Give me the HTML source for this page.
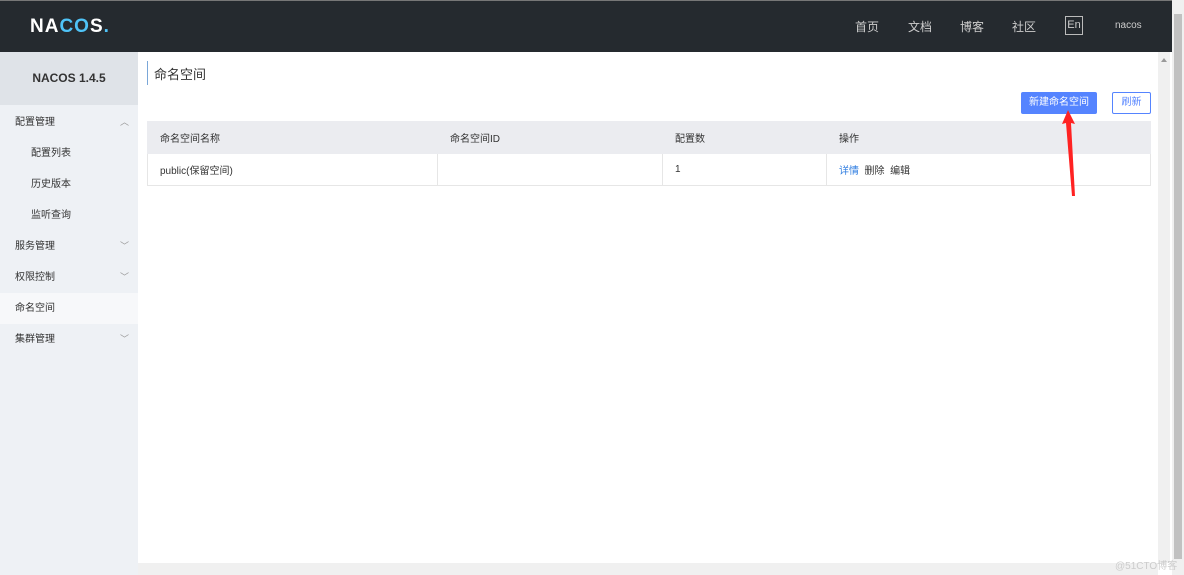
<!DOCTYPE html>
<html><head><meta charset="utf-8"><style>
*{margin:0;padding:0;box-sizing:border-box}
body{width:1184px;height:575px;overflow:hidden;font-family:"Liberation Sans","Noto Sans CJK SC",sans-serif;background:#fff;position:relative;font-size:10px;color:#333}
.hdr{position:absolute;left:0;top:0;width:1172px;height:52px;background:#252a2f;border-top:1px solid #777}
.logo{position:absolute;left:30px;top:15px;color:#fff;font-weight:bold;font-size:19px;letter-spacing:1px}
.nav{position:absolute;top:17px;color:#ccc;font-size:12px}
.en{position:absolute;left:1065px;top:15px;width:18px;height:19px;border:1px solid #bbb;color:#ccc;font-size:11px;text-align:center;line-height:17px}
.side{position:absolute;left:0;top:52px;width:138px;height:523px;background:#eef1f5}
.ver{height:53px;background:#dfe3e8;text-align:center;line-height:53px;font-weight:bold;font-size:12px;color:#333}
.it{height:31px;line-height:31px;padding-left:15px;font-size:10px;color:#333;position:relative;top:2px}
.it.sub{padding-left:31px}
.it.act{background:#f7f8fa}
.chev{position:absolute;right:9px;top:0;color:#999;font-size:9px}
.vs{position:absolute;left:1158px;top:52px;width:12px;height:511px;background:#f0f0f0}
.hs{position:absolute;left:138px;top:563px;width:1020px;height:12px;background:#f0f0f0}
.os{position:absolute;left:1172px;top:0;width:12px;height:575px;background:#f0f0f0}
.os i{position:absolute;left:2px;top:14px;width:8px;height:545px;background:#c1c1c1}
table{position:absolute;left:147px;top:121px;width:1004px;border-collapse:collapse;font-size:10px}
td{height:32px;padding-left:12px;border:1px solid #e6e6e6}
tr.h td{background:#ebecf0;border-color:#ebecf0}
</style></head><body>
<div class="hdr">
<div class="logo">NA<span style="color:#4fc3f7">CO</span>S<span style="color:#4fc3f7">.</span></div>
<div class="nav" style="left:855px">首页</div>
<div class="nav" style="left:908px">文档</div>
<div class="nav" style="left:960px">博客</div>
<div class="nav" style="left:1012px">社区</div>
<div class="en">En</div>
<div class="nav" style="left:1115px;font-size:10px;top:19px">nacos</div>
</div>
<div class="side">
<div class="ver">NACOS 1.4.5</div>
<div class="it">配置管理<span class="chev">︿</span></div>
<div class="it sub">配置列表</div>
<div class="it sub">历史版本</div>
<div class="it sub">监听查询</div>
<div class="it">服务管理<span class="chev">﹀</span></div>
<div class="it">权限控制<span class="chev">﹀</span></div>
<div class="it act">命名空间</div>
<div class="it">集群管理<span class="chev">﹀</span></div>
</div>
<div style="position:absolute;left:147px;top:61px;width:1px;height:24px;background:#7aa7d8"></div>
<div style="position:absolute;left:154px;top:64px;font-size:13px;color:#333">命名空间</div>
<div style="position:absolute;left:1021px;top:92px;width:76px;height:22px;background:#5584ff;border-radius:2px;color:#fff;text-align:center;line-height:22px;font-size:10px">新建命名空间</div>
<div style="position:absolute;left:1112px;top:92px;width:39px;height:22px;border:1px solid #5584ff;border-radius:2px;color:#5584ff;text-align:center;line-height:20px;font-size:10px">刷新</div>
<table>
<tr class="h"><td style="width:290px">命名空间名称</td><td style="width:225px">命名空间ID</td><td style="width:164px">配置数</td><td>操作</td></tr>
<tr><td>public(保留空间)</td><td></td><td>1</td><td><span style="color:#2e7ce0">详情</span>&nbsp; 删除 &nbsp;编辑</td></tr>
</table>
<svg style="position:absolute;left:1060px;top:108px" width="20" height="90"><polygon points="8,2 2,16 6,15 12,88 15,88 11,15 15,16" fill="#f22"/></svg>
<div class="vs"><div style="position:absolute;left:3px;top:6px;border:3px solid transparent;border-bottom:4px solid #999;border-top:0"></div></div>
<div class="hs"></div>
<div class="os"><i></i></div>
<div style="position:absolute;left:1115px;top:557px;color:#ccc;font-size:10px">@51CTO博客</div>
</body></html>
